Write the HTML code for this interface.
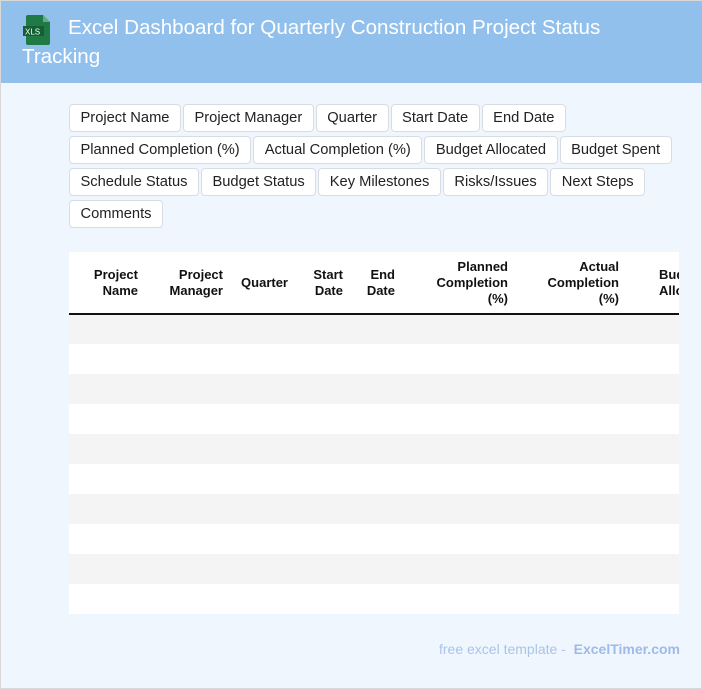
<!DOCTYPE html>
<html><head><style>
*{margin:0;padding:0;box-sizing:border-box}
body{width:702px;height:689px;background:#f0f6fe;font-family:"Liberation Sans",Arial,sans-serif;position:relative;overflow:hidden;border:1px solid #d8d8d8}
.hdr{position:absolute;left:0;top:0;width:702px;height:82px;background:#92c0ec;color:#fff;font-size:20.6px;line-height:29px;padding:12px 20px 0 21px}
.ico{position:absolute;left:22px;top:14px;width:28px;height:30px}
.chips{position:absolute;left:68px;top:103px;width:620px}
.row{display:flex;gap:2px;margin-bottom:4px}
.chip{display:block;height:28px;line-height:26px;border:1px solid #d8dde4;background:#fff;border-radius:4px;padding:0 10.5px;font-size:14.7px;color:#222}
.tbl{position:absolute;left:68px;top:251px;width:610px;height:362px;background:#fff;overflow:hidden}
table{border-collapse:collapse;table-layout:fixed;width:720px}
th{font-size:13px;font-weight:bold;text-align:right;vertical-align:middle;height:62px;padding-right:8px;line-height:16px;color:#111;border-bottom:2px solid #111}
td{height:30px}
tr.g td{background:#f4f4f4}
.ft{position:absolute;right:21px;top:640px;font-size:14px;color:#a9c4e8}
.ft b{color:#9dbbe6}
</style></head><body>
<div class="hdr"><svg class="ico" viewBox="0 0 28 30"><path d="M5 0h15l7 7v21q0 2-2 2H5q-2 0-2-2V2q0-2 2-2z" fill="#1f7a45"/><path d="M20 0v7h7z" fill="#5fb07f"/><rect x="0" y="11" width="21" height="10" fill="#155f34"/><text x="2" y="19.5" font-size="8" fill="#fff" font-family="Liberation Sans">XLS</text></svg><span style="padding-left:46px">Excel Dashboard for Quarterly Construction Project Status Tracking</span></div>
<div class="chips">
<div class="row"><span class="chip">Project Name</span><span class="chip">Project Manager</span><span class="chip">Quarter</span><span class="chip">Start Date</span><span class="chip">End Date</span></div>
<div class="row"><span class="chip">Planned Completion (%)</span><span class="chip">Actual Completion (%)</span><span class="chip">Budget Allocated</span><span class="chip">Budget Spent</span></div>
<div class="row"><span class="chip">Schedule Status</span><span class="chip">Budget Status</span><span class="chip">Key Milestones</span><span class="chip">Risks/Issues</span><span class="chip">Next Steps</span></div>
<div class="row"><span class="chip">Comments</span></div>
</div>
<div class="tbl"><table>
<colgroup><col style="width:77px"><col style="width:85px"><col style="width:65px"><col style="width:55px"><col style="width:52px"><col style="width:113px"><col style="width:111px"><col style="width:162px"></colgroup>
<tr><th>Project<br>Name</th><th>Project<br>Manager</th><th>Quarter</th><th>Start<br>Date</th><th>End<br>Date</th><th>Planned<br>Completion<br>(%)</th><th>Actual<br>Completion<br>(%)</th><th style="text-align:left;padding-left:32px">Budget<br>Allocated</th></tr>
<tr class="g"><td colspan="8"></td></tr><tr><td colspan="8"></td></tr>
<tr class="g"><td colspan="8"></td></tr><tr><td colspan="8"></td></tr>
<tr class="g"><td colspan="8"></td></tr><tr><td colspan="8"></td></tr>
<tr class="g"><td colspan="8"></td></tr><tr><td colspan="8"></td></tr>
<tr class="g"><td colspan="8"></td></tr><tr><td colspan="8"></td></tr>
</table></div>
<div class="ft">free excel template - &nbsp;<b>ExcelTimer.com</b></div>
</body></html>
